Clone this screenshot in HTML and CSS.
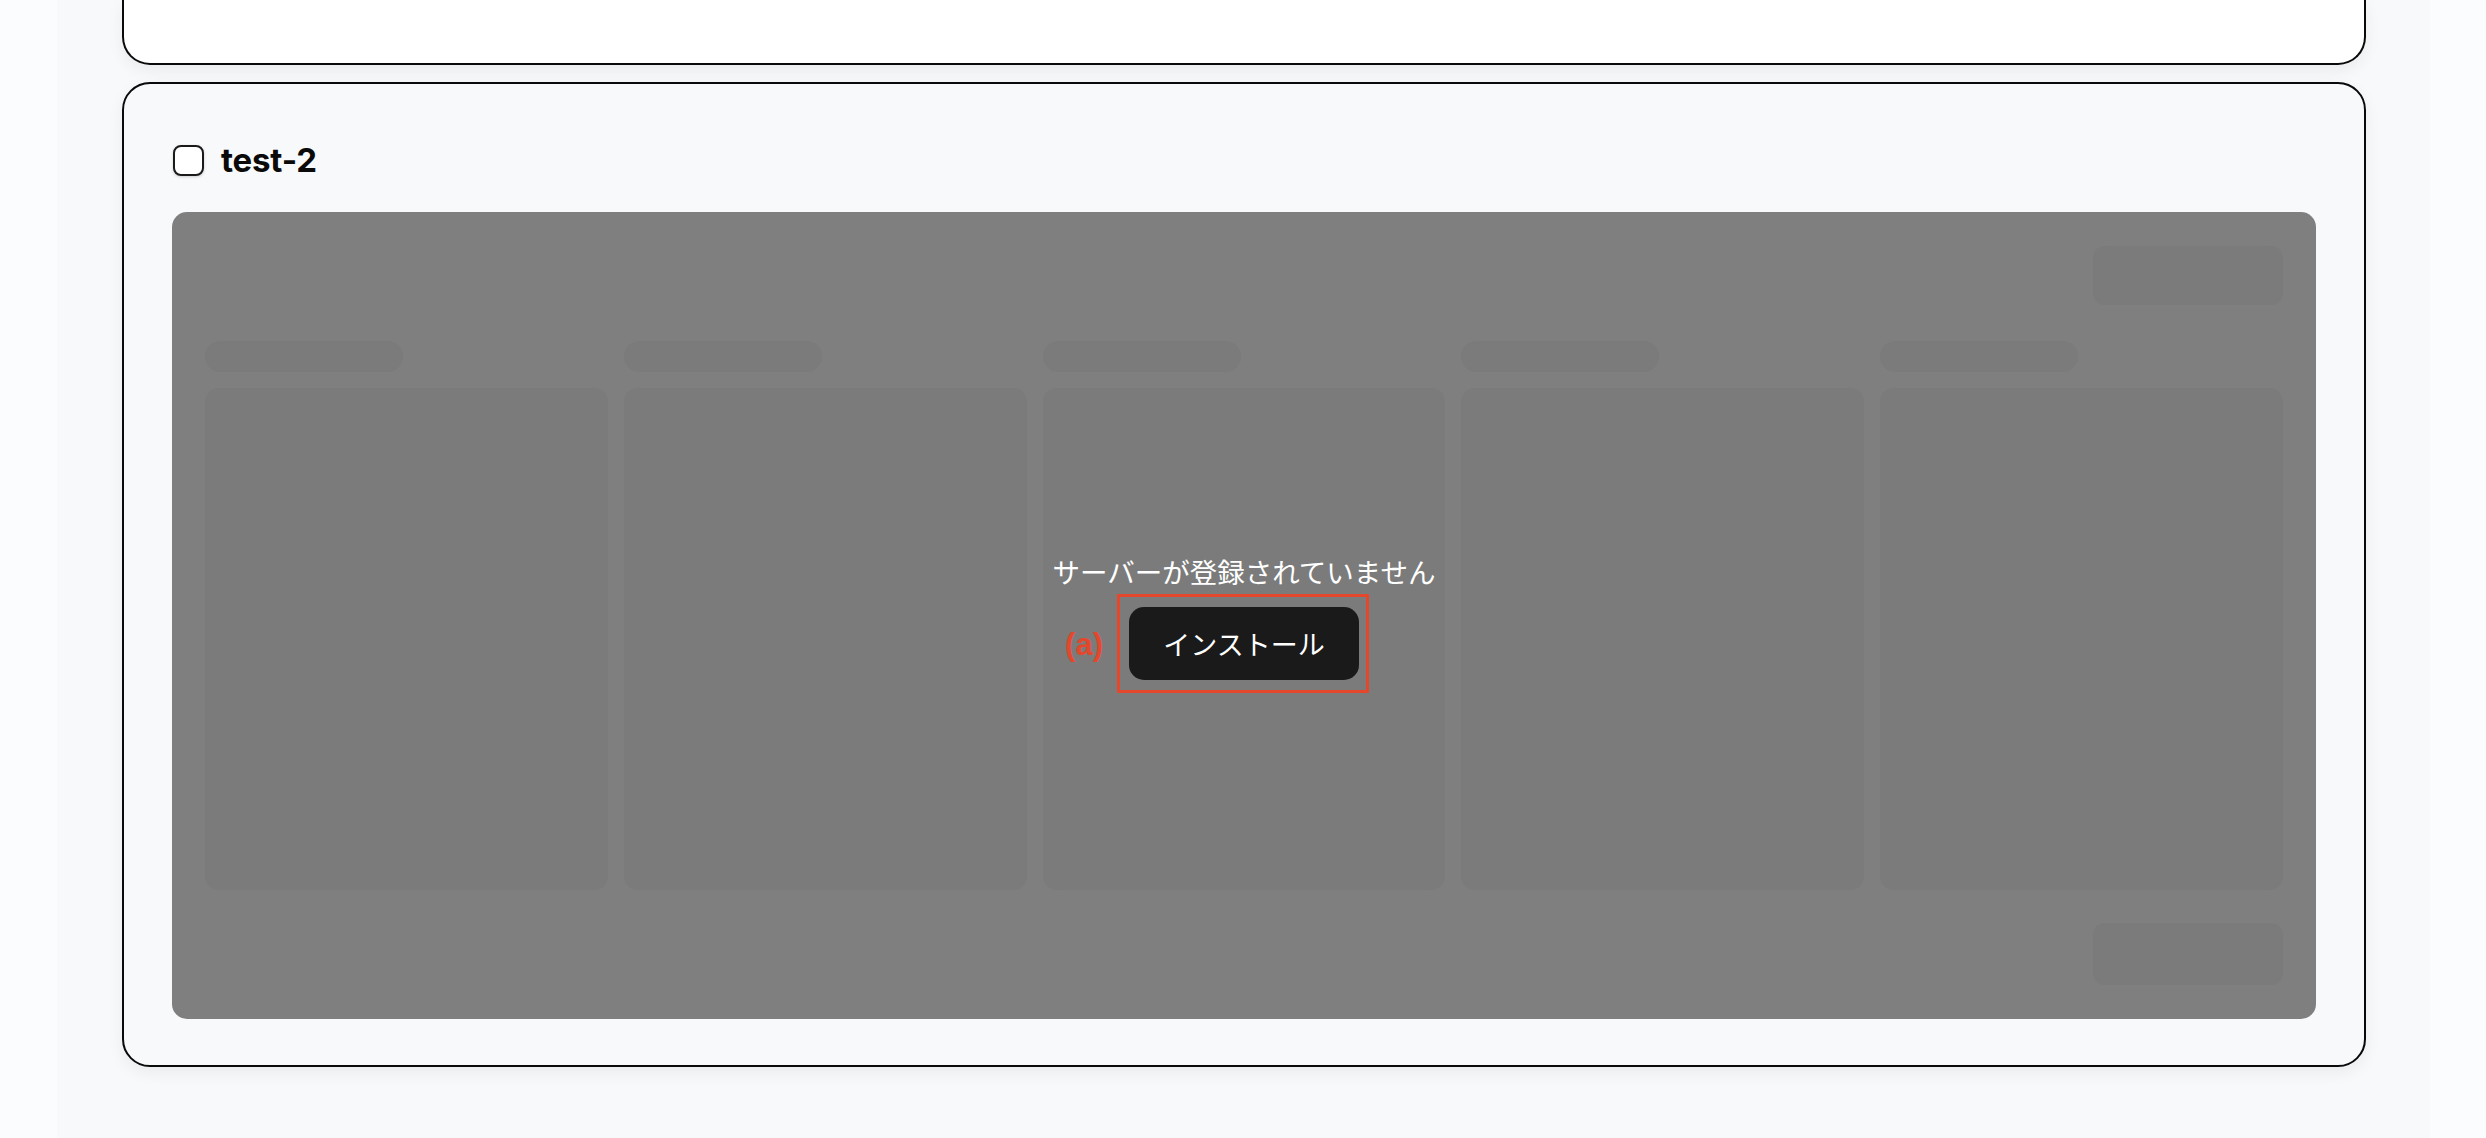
FILE: index.html
```html
<!DOCTYPE html>
<html lang="ja">
<head>
<meta charset="utf-8">
<title>test-2</title>
<link rel="stylesheet" href="styles.css">
</head>
<body>
<main class="main">
  <section class="card card-prev"></section>
  <section class="card">
    <div class="card-head">
      <span class="checkbox"></span>
      <h2 class="card-title">test-2</h2>
    </div>
    <div class="panel">
      <div class="sk-row">
        <div class="sk-btn"></div>
      </div>
      <div class="sk-cols">
        <div class="sk-col"><div class="sk-head"></div><div class="sk-card"></div></div>
        <div class="sk-col"><div class="sk-head"></div><div class="sk-card"></div></div>
        <div class="sk-col"><div class="sk-head"></div><div class="sk-card"></div></div>
        <div class="sk-col"><div class="sk-head"></div><div class="sk-card"></div></div>
        <div class="sk-col"><div class="sk-head"></div><div class="sk-card"></div></div>
      </div>
      <div class="sk-row sk-row-bottom">
        <div class="sk-btn sk-btn-tall"></div>
      </div>
      <div class="overlay">
        <p class="overlay-text">サーバーが登録されていません</p>
        <div class="btn-wrap">
          <span class="anno-label">(a)</span>
          <span class="anno-box"></span>
          <button class="install-btn" type="button">インストール</button>
        </div>
      </div>
    </div>
  </section>
</main>
</body>
</html>
```

FILE: styles.css
```css
* {
  box-sizing: border-box;
}

html, body {
  margin: 0;
  padding: 0;
}

body {
  background: #fbfcfd;
  font-family: "Inter", "Noto Sans CJK JP", sans-serif;
  color: #0a0a0a;
  height: 1138px;
  overflow: hidden;
}

.main {
  margin-left: 57px;
  width: 2373px;
  height: 1138px;
  background: #f8f9fb;
  padding: 0 64px 0 65px;
}

.card {
  background: #f8f9fb;
  border: 2px solid #0a0a0a;
  border-radius: 28px;
  box-shadow: 0 6px 16px rgba(0, 0, 0, 0.06);
  padding: 48px 48px 46px;
  margin-top: 17px;
}

.card-prev {
  background: #ffffff;
  border-top: none;
  border-radius: 0 0 28px 28px;
  height: 65px;
  margin-top: 0;
  padding: 0;
}

.card-head {
  display: flex;
  align-items: center;
  gap: 17px;
  height: 56px;
  margin-bottom: 24px;
  padding-left: 1px;
}

.checkbox {
  width: 31px;
  height: 31px;
  border: 2px solid #1a1a1a;
  border-radius: 8px;
  background: #ffffff;
  box-shadow: 0 1px 3px rgba(0, 0, 0, 0.18);
}

.card-title {
  margin: 0;
  font-size: 33px;
  font-weight: 700;
  letter-spacing: -0.2px;
  line-height: 1;
  color: #0a0a0a;
}

.panel {
  position: relative;
  background: #7f7f7f;
  border-radius: 15px;
  padding: 34px 33px;
}

.sk-row {
  display: flex;
  justify-content: flex-end;
}

.sk-row-bottom {
  margin-top: 33px;
}

.sk-btn {
  width: 190px;
  height: 59px;
  border-radius: 12px;
  background: #7b7b7b;
}

.sk-btn-tall {
  height: 62px;
}

.sk-cols {
  display: grid;
  grid-template-columns: repeat(5, 1fr);
  gap: 16px;
  margin-top: 36px;
}

.sk-col {
  display: flex;
  flex-direction: column;
  gap: 16px;
}

.sk-head {
  width: 198px;
  height: 31px;
  border-radius: 16px;
  background: #7b7b7b;
}

.sk-card {
  height: 502px;
  border-radius: 14px;
  background: #7b7b7b;
}

.overlay {
  position: absolute;
  inset: 0;
  display: flex;
  flex-direction: column;
  align-items: center;
  justify-content: center;
  gap: 16px;
}

.overlay-text {
  margin: 0;
  color: #ffffff;
  font-size: 27.5px;
  line-height: 40px;
  font-family: "Noto Sans CJK JP", sans-serif;
}

.btn-wrap {
  position: relative;
}

.install-btn {
  display: block;
  width: 230px;
  height: 73px;
  border: none;
  border-radius: 15px;
  background: #1a1a1a;
  color: #ffffff;
  font-family: "Noto Sans CJK JP", sans-serif;
  font-size: 27px;
  padding: 0;
}

.anno-box {
  position: absolute;
  top: -13px;
  left: -12px;
  right: -10px;
  bottom: -13px;
  border: 3px solid #e4472c;
  pointer-events: none;
}

.anno-label {
  position: absolute;
  right: calc(100% + 26px);
  top: 50%;
  transform: translateY(-50%);
  color: #e4472c;
  font-family: "Liberation Sans", Arial, sans-serif;
  font-weight: 700;
  font-size: 31px;
  line-height: 1;
  white-space: nowrap;
}
```
